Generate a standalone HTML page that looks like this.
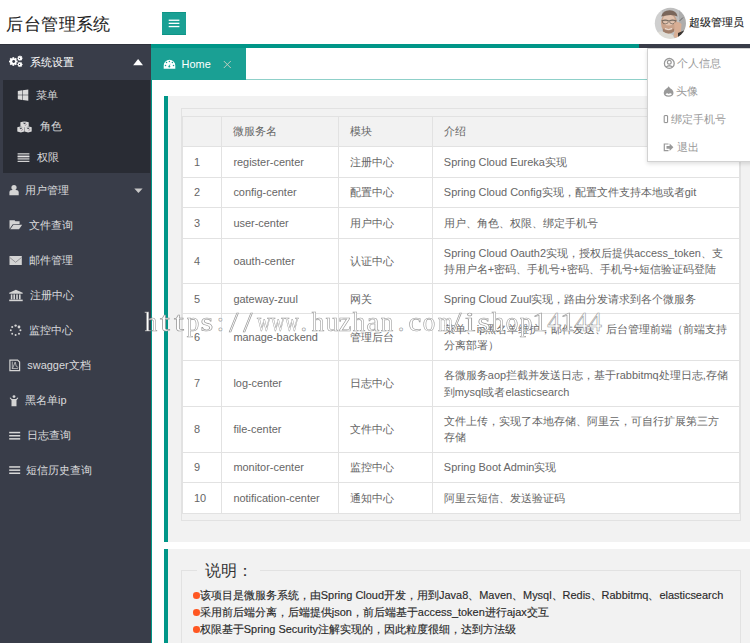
<!DOCTYPE html>
<html><head><meta charset="utf-8">
<style>
*{margin:0;padding:0;box-sizing:border-box}
html,body{width:750px;height:643px;overflow:hidden;background:#fff;font-family:"Liberation Sans",sans-serif;font-size:10.94px}
.abs{position:absolute}
#logo{left:6.2px;top:11.5px;font-size:17.2px;letter-spacing:0.45px;line-height:24px;color:#1e1e1e;-webkit-text-stroke:0.08px #1e1e1e;white-space:nowrap}
#menubtn{left:162px;top:12px;width:24px;height:23px;background:#1aa094;border-top:1px solid #0f9486;border-bottom:1px solid #0f9486}
#side{left:0;top:44px;width:151px;height:600px;background:#393d49;border-top:1px solid #2f323c}
.it{position:absolute;left:0;width:150px;height:35px;line-height:35px;color:rgba(255,255,255,.82);white-space:nowrap}
.it span{position:absolute;top:0}
.ic{position:absolute;overflow:visible}
#child{left:2.5px;top:79.8px;width:147.5px;height:93.2px;background:#292c34}
#cline{left:151px;top:79px;width:1px;height:600px;background:#009688}
#topbar{left:151px;top:44px;width:488px;height:4px;background:#009688}
#topbar2{left:639px;top:44px;width:111px;height:4px;background:#393d49}
#tab{left:151px;top:48px;width:95px;height:31.6px;background:#1aa094;color:#fff}
#tabline{left:246px;top:79px;width:504px;height:1px;background:#8fd0c9}
.quote{position:absolute;left:164px;width:600px;background:#f2f2f2;border-left:4px solid #009688}
table{border-collapse:collapse;position:absolute;left:181.7px;top:115.9px;width:558.3px;color:#666;background:#fff;table-layout:fixed}
td,th{border:1px solid #e2e2e2;font-weight:normal;text-align:left;padding:0 0 0 11.2px;line-height:16.2px;vertical-align:middle;white-space:nowrap;overflow:hidden}
th{background:#f2f2f2}
#dd{left:647px;top:48px;width:110px;height:113.5px;background:#fff;border:1px solid #d2d2d2;box-shadow:0 2px 4px rgba(0,0,0,.12);color:#999}
#dd div{position:absolute;white-space:nowrap;line-height:16px}
.bl{position:absolute;left:193.2px;width:6.6px;height:6.6px;border-radius:50%;background:#ff5722}
.bt{position:absolute;left:199.8px;color:#2a2a2a;-webkit-text-stroke:0.15px #2a2a2a;white-space:nowrap;line-height:16px}
#wm{left:144px;top:308.4px;font-family:"Liberation Serif",serif;font-size:26.3px;line-height:30px;color:#fff;-webkit-text-stroke:0.6px #9a9a9a;white-space:nowrap}
#wm span{display:inline-block;width:13.9px;text-align:center}
</style></head><body>
<div id="logo" class="abs">后台管理系统</div>
<div id="menubtn" class="abs">
<svg class="ic" style="left:0;top:-1px" width="24" height="23"><rect x="6.7" y="7.6" width="10.7" height="1.3" fill="#fff"/><rect x="6.7" y="10.7" width="10.7" height="1.3" fill="#fff"/><rect x="6.7" y="13.9" width="10.7" height="1.3" fill="#fff"/></svg>
</div>
<!-- avatar -->
<svg class="abs" style="left:654px;top:7px" width="33" height="33">
<defs><clipPath id="cc"><circle cx="16.4" cy="16.3" r="15.6"/></clipPath><filter id="bl" x="-20%" y="-20%" width="140%" height="140%"><feGaussianBlur stdDeviation="0.55"/></filter></defs>
<g clip-path="url(#cc)"><g filter="url(#bl)">
<rect width="33" height="33" fill="#bfbfbf"/>
<rect x="0" y="0" width="8" height="33" fill="#cfcfcf"/>
<rect x="25" y="0" width="8" height="33" fill="#adadad"/>
<path d="M0 33 L2 26 Q7 23 12 25 L19 28 L21 33Z" fill="#dedcd6"/>
<ellipse cx="15" cy="16" rx="8" ry="10.5" fill="#c9a28a"/>
<ellipse cx="14.8" cy="13" rx="6" ry="5.5" fill="#e2c4b0"/>
<path d="M7.2 9.5 Q9 3 16 3.3 Q22.5 3.6 23.5 9.5 Q18 6.5 7.2 9.5Z" fill="#7a665a"/>
<path d="M7.5 13.6 L22.5 13.6" stroke="#55504a" stroke-width="0.6"/>
<ellipse cx="11.3" cy="14.8" rx="3" ry="2" fill="none" stroke="#55504a" stroke-width="0.6"/>
<ellipse cx="18.6" cy="14.8" rx="3" ry="2" fill="none" stroke="#55504a" stroke-width="0.6"/>
<path d="M9 21.5 Q14.5 25.5 20 21.5 L20 24.5 Q14.5 28.5 9 24.5Z" fill="#a07e6a"/>
<path d="M11 21.6 Q14.5 23.5 18 21.6" stroke="#f4eee8" stroke-width="0.9" fill="none"/>
<path d="M20 16 Q24.5 13.5 27.5 17 L26.5 30 Q22 33 19.5 29 Q21.5 24 20 16Z" fill="#d8ae94"/>
<path d="M24 26 L30 23.5 L31 33 L24 33Z" fill="#3a3632"/>
<path d="M25.5 14 L29 10.5" stroke="#555" stroke-width="0.8"/>
</g></g></svg>
<div class="abs" style="left:688.5px;top:14px;line-height:16px;color:#1a1a1a;-webkit-text-stroke:0.12px #1a1a1a;font-size:10.94px;white-space:nowrap">超级管理员</div>

<div id="side" class="abs"></div>
<div id="child" class="abs"></div>

<!-- sidebar items -->
<div class="it" style="top:44.7px;color:#fff"><span style="left:30px">系统设置</span></div>
<svg class="ic" style="left:0;top:44px" width="150" height="35">
 <g fill="#fff">
 <circle cx="13.3" cy="17.5" r="3.3"/>
 <g transform="translate(13.3 17.5)"><rect x="-0.9" y="-4.3" width="1.8" height="8.6"/><rect x="-0.9" y="-4.3" width="1.8" height="8.6" transform="rotate(45)"/><rect x="-0.9" y="-4.3" width="1.8" height="8.6" transform="rotate(90)"/><rect x="-0.9" y="-4.3" width="1.8" height="8.6" transform="rotate(135)"/></g>
 <g transform="translate(19.95 14.2)"><circle r="2"/><rect x="-0.55" y="-2.6" width="1.1" height="5.2"/><rect x="-0.55" y="-2.6" width="1.1" height="5.2" transform="rotate(45)"/><rect x="-0.55" y="-2.6" width="1.1" height="5.2" transform="rotate(90)"/><rect x="-0.55" y="-2.6" width="1.1" height="5.2" transform="rotate(135)"/></g>
 <g transform="translate(19.95 20.5)"><circle r="2"/><rect x="-0.55" y="-2.6" width="1.1" height="5.2"/><rect x="-0.55" y="-2.6" width="1.1" height="5.2" transform="rotate(45)"/><rect x="-0.55" y="-2.6" width="1.1" height="5.2" transform="rotate(90)"/><rect x="-0.55" y="-2.6" width="1.1" height="5.2" transform="rotate(135)"/></g>
 </g>
 <g fill="#393d49"><circle cx="13.7" cy="17.5" r="1.4"/><circle cx="19.5" cy="14.3" r="0.6"/><circle cx="19.5" cy="20.4" r="0.6"/></g>
 <path d="M133.2 21.3 L138.1 15 L143 21.3Z" fill="#fff"/>
</svg>

<div class="it" style="top:79.8px;height:31.2px;line-height:31.2px"><span style="left:36px">菜单</span></div>
<svg class="ic" style="left:0;top:79.3px" width="40" height="31"><path d="M17.8 11.9 L22.2 11.3 L22.2 15.85 L17.8 15.85Z M22.7 11.2 L28.3 10.5 L28.3 15.85 L22.7 15.85Z M17.8 16.35 L22.2 16.35 L22.2 20.9 L17.8 20.3Z M22.7 16.35 L28.3 16.35 L28.3 21.7 L22.7 21Z" fill="#dadada"/></svg>

<div class="it" style="top:110.9px;height:31.2px;line-height:31.2px"><span style="left:39.8px">角色</span></div>
<svg class="ic" style="left:0;top:110.5px" width="40" height="31"><g fill="#dadada"><path d="M20.4 11.3 Q24.5 9.8 28.7 11.3 L28.7 15.6 L24.5 16.6 L20.4 15.6Z"/><path d="M17.3 16.3 Q20.85 14.8 24.4 16.3 L24.4 20.6 L20.85 21.6 L17.3 20.6Z"/><path d="M24.6 16.3 Q28.15 14.8 31.7 16.3 L31.7 20.6 L28.15 21.6 L24.6 20.6Z"/></g>
<g fill="#3a3d47"><path d="M22.8 11.7 L26.2 11.7 L24.5 13.2Z"/><path d="M19.2 16.7 L22.5 16.7 L20.85 18.2Z"/><path d="M26.5 16.7 L29.8 16.7 L28.15 18.2Z"/></g>
<g stroke="#6b4c66" stroke-width="0.7"><path d="M25.3 14.6 L26.3 13.3"/><path d="M21.6 19.6 L22.6 18.3"/><path d="M28.9 19.6 L29.9 18.3"/></g></svg>

<div class="it" style="top:142.2px;height:31.2px;line-height:31.2px"><span style="left:36.6px">权限</span></div>
<svg class="ic" style="left:0;top:141.8px" width="40" height="31"><rect x="17.6" y="12.8" width="11.8" height="3.6" fill="#6e6e74"/><g fill="#e4e4e4"><rect x="17.6" y="11.3" width="11.8" height="1.1"/><rect x="17.6" y="13.9" width="11.8" height="1.1"/><rect x="17.6" y="16.4" width="11.8" height="1.1"/><rect x="17.6" y="18.8" width="11.8" height="1.1"/></g></svg>

<div class="it" style="top:173px"><span style="left:25.2px">用户管理</span></div>
<svg class="ic" style="left:0;top:173px" width="150" height="35"><g fill="#d4d4d4"><circle cx="14" cy="14.5" r="2.6"/><path d="M9.4 22.2 L9.4 19 Q9.4 17 12 17 L16 17 Q18.7 17 18.7 19 L18.7 22.2Z"/></g><path d="M134.3 15.6 L142.6 15.6 L138.45 20Z" fill="#c8c8c8"/></svg>

<div class="it" style="top:208px"><span style="left:28.9px">文件查询</span></div>
<svg class="ic" style="left:0;top:208px" width="40" height="35"><g fill="#d4d4d4"><path d="M9.5 21 L9.5 12.2 L14.6 12.2 L15.4 13.3 L19.6 13.3 L19.6 16 L12.8 16.2Z"/><path d="M10.2 21.2 L13.5 16.8 L22.2 16.8 L19 21.2Z"/></g></svg>

<div class="it" style="top:243px"><span style="left:28.5px">邮件管理</span></div>
<svg class="ic" style="left:0;top:243px" width="40" height="35"><rect x="9.5" y="13" width="12.3" height="9" fill="#d4d4d4"/><path d="M9.8 14.5 L15.6 19.3 L21.5 14.5" fill="none" stroke="#8c8c90" stroke-width="0.9"/></svg>

<div class="it" style="top:278px"><span style="left:29.5px">注册中心</span></div>
<svg class="ic" style="left:0;top:278px" width="40" height="35"><g fill="#d4d4d4"><path d="M9.2 14.7 L15.9 11.7 L22.7 14.7 L22.7 15.7 L9.2 15.7Z"/><rect x="10.8" y="16.4" width="1.6" height="5"/><rect x="13.4" y="16.4" width="1.6" height="5"/><rect x="16.2" y="16.4" width="1.6" height="5"/><rect x="19" y="16.4" width="1.6" height="5"/><rect x="9.2" y="21.6" width="13.5" height="1.6"/></g></svg>

<div class="it" style="top:313px"><span style="left:28.5px">监控中心</span></div>
<svg class="ic" style="left:0;top:313px" width="40" height="35"><g fill="#d4d4d4"><circle cx="15.6" cy="12.6" r="1.2"/><circle cx="19" cy="14" r="1.4"/><circle cx="20.4" cy="17.3" r="1.05"/><circle cx="19" cy="20.7" r="1"/><circle cx="15.6" cy="22" r="1"/><circle cx="12.2" cy="20.7" r="0.95"/><circle cx="10.8" cy="17.3" r="0.95"/><circle cx="12.2" cy="14" r="1.05"/></g></svg>

<div class="it" style="top:348px"><span style="left:27.3px">swagger文档</span></div>
<svg class="ic" style="left:0;top:348px" width="40" height="35"><path d="M9.9 12.1 L17.6 12.1 L19.6 14.1 L19.6 22.7 L9.9 22.7Z" fill="none" stroke="#d4d4d4" stroke-width="1.2"/><path d="M12.3 13.6 L12.3 21 M12.3 21 L15.2 14 L16.2 18.2 L18.3 19.5 M13 20.5 L18 20.6" fill="none" stroke="#c8c8c8" stroke-width="0.8"/></svg>

<div class="it" style="top:383px"><span style="left:25.1px">黑名单ip</span></div>
<svg class="ic" style="left:0;top:383px" width="40" height="35"><g fill="#d4d4d4"><circle cx="14" cy="13.6" r="1.4"/><path d="M10 14.3 L12 16 L16 16 L18 14.3 L18.2 15.2 L16.5 17.2 L16.5 23.2 L11.5 23.2 L11.5 17.2 L9.8 15.2Z"/></g></svg>

<div class="it" style="top:418px"><span style="left:26.9px">日志查询</span></div>
<svg class="ic" style="left:0;top:418px" width="40" height="35"><g fill="#d8d8d8"><rect x="9.2" y="13.8" width="11" height="1.5"/><rect x="9.2" y="17" width="11" height="1.5"/><rect x="9.2" y="20.1" width="11" height="1.5"/></g></svg>

<div class="it" style="top:453px"><span style="left:26.3px">短信历史查询</span></div>
<svg class="ic" style="left:0;top:453px" width="40" height="35"><g fill="#d8d8d8"><rect x="9.2" y="13.2" width="11" height="1.5"/><rect x="9.2" y="16.4" width="11" height="1.5"/><rect x="9.2" y="19.5" width="11" height="1.5"/></g></svg>

<div id="cline" class="abs"></div>
<div id="topbar" class="abs"></div>
<div id="topbar2" class="abs"></div>
<div id="tab" class="abs">
<svg class="ic" style="left:-1px;top:0" width="96" height="32"><path d="M13.7 20.7 L13.7 17.5 A5.8 5.8 0 0 1 25.3 17.5 L25.3 20.7Z" fill="#fff"/><g fill="#1aa094"><circle cx="16.5" cy="14.5" r="0.75"/><circle cx="19.4" cy="13.5" r="0.75"/><circle cx="22.4" cy="14.5" r="0.75"/><circle cx="15.5" cy="17.4" r="0.75"/><circle cx="23.5" cy="17.4" r="0.75"/><circle cx="19.3" cy="18.4" r="1"/><path d="M18.9 18.2 L20.5 15.2 L19.7 18.6Z"/></g>
<path d="M73.8 13 L80.8 20 M80.8 13 L73.8 20" stroke="#cfd3c4" stroke-width="0.9"/></svg>
<div class="abs" style="left:30.6px;top:8px;line-height:16px;white-space:nowrap">Home</div>
</div>
<div id="tabline" class="abs"></div>

<div class="quote" style="top:96px;height:445.5px"></div>
<div class="abs" style="left:181px;top:107.5px;width:559.6px;height:413.8px;border:1px solid #e2e2e2"></div>
<table>
<colgroup><col style="width:39.5px"><col style="width:116.8px"><col style="width:93.7px"><col></colgroup>
<tr style="height:30.3px"><th></th><th>微服务名</th><th>模块</th><th>介绍</th></tr>
<tr style="height:30.5px"><td>1</td><td>register-center</td><td>注册中心</td><td>Spring Cloud Eureka实现</td></tr>
<tr style="height:30.1px"><td>2</td><td>config-center</td><td>配置中心</td><td>Spring Cloud Config实现，配置文件支持本地或者git</td></tr>
<tr style="height:31px"><td>3</td><td>user-center</td><td>用户中心</td><td>用户、角色、权限、绑定手机号</td></tr>
<tr style="height:45.7px"><td>4</td><td>oauth-center</td><td>认证中心</td><td>Spring Cloud Oauth2实现，授权后提供access_token、支<br>持用户名+密码、手机号+密码、手机号+短信验证码登陆</td></tr>
<tr style="height:29.4px"><td>5</td><td>gateway-zuul</td><td>网关</td><td>Spring Cloud Zuul实现，路由分发请求到各个微服务</td></tr>
<tr style="height:47.1px"><td>6</td><td>manage-backend</td><td>管理后台</td><td>菜单、ip黑名单维护，邮件发送、后台管理前端（前端支持<br>分离部署）</td></tr>
<tr style="height:46.1px"><td>7</td><td>log-center</td><td>日志中心</td><td>各微服务aop拦截并发送日志，基于rabbitmq处理日志,存储<br>到mysql或者elasticsearch</td></tr>
<tr style="height:45.8px"><td>8</td><td>file-center</td><td>文件中心</td><td>文件上传，实现了本地存储、阿里云，可自行扩展第三方<br>存储</td></tr>
<tr style="height:30.4px"><td>9</td><td>monitor-center</td><td>监控中心</td><td>Spring Boot Admin实现</td></tr>
<tr style="height:30.4px"><td>10</td><td>notification-center</td><td>通知中心</td><td>阿里云短信、发送验证码</td></tr>
</table>

<div class="quote" style="top:549.3px;height:100px"></div>
<div class="abs" style="left:181px;top:570px;width:559.6px;height:100px;border:1px solid #e2e2e2"></div>
<div class="abs" style="left:196.6px;top:565px;width:63px;height:10px;background:#f2f2f2"></div>
<div class="abs" style="left:204.8px;top:560.5px;font-size:15.6px;line-height:20px;color:#333;white-space:nowrap">说明：</div>
<div class="bl" style="top:592px"></div><div class="bt" style="top:586.5px">该项目是微服务系统，由Spring Cloud开发，用到Java8、Maven、Mysql、Redis、Rabbitmq、elasticsearch</div>
<div class="bl" style="top:609.3px"></div><div class="bt" style="top:603.8px">采用前后端分离，后端提供json，前后端基于access_token进行ajax交互</div>
<div class="bl" style="top:626.4px"></div><div class="bt" style="top:620.9px">权限基于Spring Security注解实现的，因此粒度很细，达到方法级</div>

<div id="wm" class="abs"><span style="transform:scaleX(0.95)">h</span><span style="transform:scaleX(1.35)">t</span><span style="transform:scaleX(1.35)">t</span><span style="transform:scaleX(0.95)">p</span><span style="transform:scaleX(1.25)">s</span><span>:</span><span style="transform:scale(1.25,1.1)">/</span><span style="transform:scale(1.25,1.1)">/</span><span style="transform:scaleX(0.72)">w</span><span style="transform:scaleX(0.72)">w</span><span style="transform:scaleX(0.72)">w</span><span>.</span><span style="transform:scaleX(0.95)">h</span><span style="transform:scaleX(0.95)">u</span><span style="transform:scaleX(1.1)">z</span><span style="transform:scaleX(0.95)">h</span><span style="transform:scaleX(1.1)">a</span><span style="transform:scaleX(0.95)">n</span><span>.</span><span style="transform:scaleX(1.1)">c</span><span style="transform:scaleX(0.95)">o</span><span style="transform:scaleX(0.72)">m</span><span style="transform:scale(1.25,1.1)">/</span><span style="transform:scaleX(1.5)">i</span><span style="transform:scaleX(1.25)">s</span><span style="transform:scaleX(0.95)">h</span><span style="transform:scaleX(0.95)">o</span><span style="transform:scaleX(0.95)">p</span><span style="transform:scaleX(1.2)">1</span><span>4</span><span style="transform:scaleX(1.2)">1</span><span>4</span><span>4</span></div>

<div id="dd" class="abs">
<svg class="ic" style="left:0.5px;top:0" width="30" height="113"><g fill="none" stroke="#999"><circle cx="20.3" cy="14.4" r="4.9" stroke-width="1.3"/><circle cx="20.3" cy="13.2" r="1.9" stroke-width="1.2"/><path d="M16.9 18.2 Q20.3 15.2 23.7 18.2" stroke-width="1.3"/>
<rect x="15.2" y="66.6" width="3.4" height="7" rx="0.3" stroke-width="1" stroke="#8a8a8a"/>
<path d="M19.5 95 L15.3 95 L15.3 101.7 L19.5 101.7" stroke-width="1.2"/></g>
<g fill="#999"><path d="M19.6 37.3 Q21 39.5 23 40.5 Q24.6 42 24.5 44 Q24.2 47.8 19.6 47.8 Q14.7 47.8 14.7 43.8 Q14.8 41 17.5 39.5 Q19 38.5 19.6 37.3Z"/>
<path d="M17.5 97 L20.6 97 L20.6 94.6 L24.4 98.35 L20.6 102.1 L20.6 99.7 L17.5 99.7Z"/></g>
<path d="M16.5 45.5 Q18 43.5 19.6 45 Q21.5 43.2 23 45.2 Q20 47.5 16.5 45.5Z" fill="#fff"/></svg>
<div style="left:29.2px;top:6px">个人信息</div>
<div style="left:28px;top:34px">头像</div>
<div style="left:23.3px;top:62px">绑定手机号</div>
<div style="left:28.7px;top:90px">退出</div>
</div>
</body></html>
